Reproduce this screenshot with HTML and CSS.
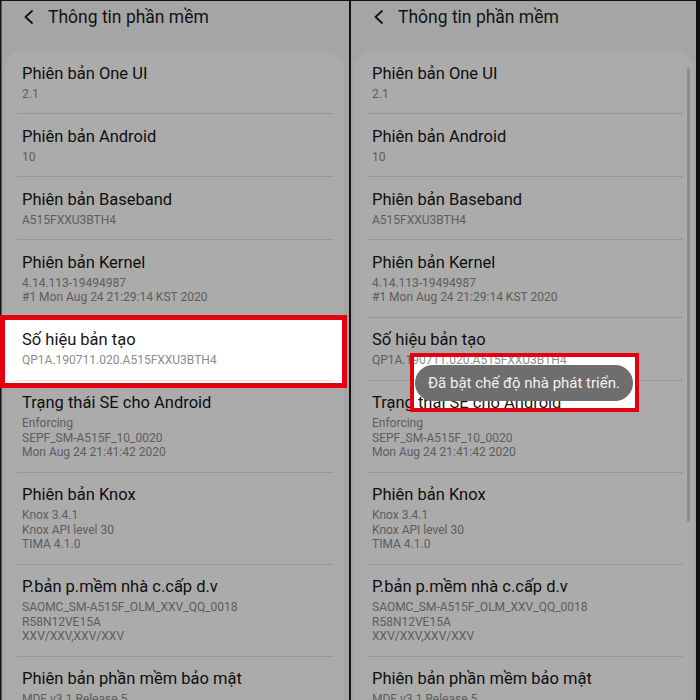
FILE: index.html
```html
<!DOCTYPE html>
<html lang="vi">
<head>
<meta charset="utf-8">
<title>Thông tin phần mềm</title>
<link rel="stylesheet" href="styles.css">
</head>
<body>
<div class="screen">
  <section class="panel panel-left">
    <header class="appbar">
      <svg class="back" viewBox="0 0 9 14" aria-hidden="true"><polyline points="8,1 1.5,7 8,13" fill="none" stroke="#1c1c1c" stroke-width="1.8" stroke-linecap="round" stroke-linejoin="round"/></svg>
      <h1 class="appbar-title">Thông tin phần mềm</h1>
    </header>
    <div class="card">
      <div class="item"><div class="item-title">Phiên bản One UI</div><div class="item-sub">2.1</div></div>
      <div class="divider"></div>
      <div class="item"><div class="item-title">Phiên bản Android</div><div class="item-sub">10</div></div>
      <div class="divider"></div>
      <div class="item"><div class="item-title">Phiên bản Baseband</div><div class="item-sub">A515FXXU3BTH4</div></div>
      <div class="divider"></div>
      <div class="item"><div class="item-title">Phiên bản Kernel</div><div class="item-sub">4.14.113-19494987<br>#1 Mon Aug 24 21:29:14 KST 2020</div></div>
      <div class="divider"></div>
      <div class="item"><div class="item-title">Số hiệu bản tạo</div><div class="item-sub">QP1A.190711.020.A515FXXU3BTH4</div></div>
      <div class="divider"></div>
      <div class="item"><div class="item-title">Trạng thái SE cho Android</div><div class="item-sub">Enforcing<br>SEPF_SM-A515F_10_0020<br>Mon Aug 24 21:41:42 2020</div></div>
      <div class="divider"></div>
      <div class="item"><div class="item-title">Phiên bản Knox</div><div class="item-sub">Knox 3.4.1<br>Knox API level 30<br>TIMA 4.1.0</div></div>
      <div class="divider"></div>
      <div class="item"><div class="item-title">P.bản p.mềm nhà c.cấp d.v</div><div class="item-sub">SAOMC_SM-A515F_OLM_XXV_QQ_0018<br>R58N12VE15A<br>XXV/XXV,XXV/XXV</div></div>
      <div class="divider"></div>
      <div class="item"><div class="item-title">Phiên bản phần mềm bảo mật</div><div class="item-sub">MDF v3.1 Release 5</div></div>
    </div>
    <div class="spot spot-build"></div>
  </section>
  <section class="panel panel-right">
    <header class="appbar">
      <svg class="back" viewBox="0 0 9 14" aria-hidden="true"><polyline points="8,1 1.5,7 8,13" fill="none" stroke="#1c1c1c" stroke-width="1.8" stroke-linecap="round" stroke-linejoin="round"/></svg>
      <h1 class="appbar-title">Thông tin phần mềm</h1>
    </header>
    <div class="card">
      <div class="item"><div class="item-title">Phiên bản One UI</div><div class="item-sub">2.1</div></div>
      <div class="divider"></div>
      <div class="item"><div class="item-title">Phiên bản Android</div><div class="item-sub">10</div></div>
      <div class="divider"></div>
      <div class="item"><div class="item-title">Phiên bản Baseband</div><div class="item-sub">A515FXXU3BTH4</div></div>
      <div class="divider"></div>
      <div class="item"><div class="item-title">Phiên bản Kernel</div><div class="item-sub">4.14.113-19494987<br>#1 Mon Aug 24 21:29:14 KST 2020</div></div>
      <div class="divider"></div>
      <div class="item"><div class="item-title">Số hiệu bản tạo</div><div class="item-sub">QP1A.190711.020.A515FXXU3BTH4</div></div>
      <div class="divider"></div>
      <div class="item"><div class="item-title">Trạng thái SE cho Android</div><div class="item-sub">Enforcing<br>SEPF_SM-A515F_10_0020<br>Mon Aug 24 21:41:42 2020</div></div>
      <div class="divider"></div>
      <div class="item"><div class="item-title">Phiên bản Knox</div><div class="item-sub">Knox 3.4.1<br>Knox API level 30<br>TIMA 4.1.0</div></div>
      <div class="divider"></div>
      <div class="item"><div class="item-title">P.bản p.mềm nhà c.cấp d.v</div><div class="item-sub">SAOMC_SM-A515F_OLM_XXV_QQ_0018<br>R58N12VE15A<br>XXV/XXV,XXV/XXV</div></div>
      <div class="divider"></div>
      <div class="item"><div class="item-title">Phiên bản phần mềm bảo mật</div><div class="item-sub">MDF v3.1 Release 5</div></div>
    </div>
    <div class="scrollbar"></div>
    <div class="spot spot-toast"></div>
    <div class="toast">Đã bật chế độ nhà phát triển.</div>
  </section>
</div>
</body>
</html>
```
FILE: styles.css
```css
html, body {
  margin: 0;
  padding: 0;
}
body {
  width: 700px;
  height: 700px;
  overflow: hidden;
  background: #1a1a1a;
  font-family: Roboto, "Noto Sans", sans-serif;
}
.screen {
  display: flex;
  width: 700px;
  height: 700px;
}
.panel {
  position: relative;
  flex: none;
  width: 350px;
  height: 700px;
  overflow: hidden;
  background: #f7f7f7;
}
.panel-left {
  box-shadow: inset 1.5px 1px 0 #1a1a1a, inset -1px 0 0 #1a1a1a;
}
.panel-right {
  box-shadow: inset 1px 1px 0 #1a1a1a, inset -4px 0 0 #1a1a1a;
}
.appbar {
  display: flex;
  align-items: flex-start;
  gap: 15px;
  height: 51px;
  box-sizing: border-box;
  padding: 6px 0 0 24px;
}
.back {
  flex: none;
  width: 9px;
  height: 14px;
  margin-top: 4px;
}
.appbar-title {
  margin: 0;
  font-size: 17.5px;
  line-height: 22px;
  font-weight: 400;
  color: #1c1c1c;
}
.card {
  margin: 0 6px 0 4px;
  background: #ffffff;
  border-radius: 20px 20px 0 0;
}
.item {
  padding: 12.5px 18px 12px;
}
.item-title {
  margin-bottom: 3px;
  font-size: 16.5px;
  line-height: 20px;
  color: #161616;
  white-space: nowrap;
}
.item-sub {
  font-size: 12px;
  line-height: 14.5px;
  color: #8c8c8c;
  white-space: nowrap;
}
.divider {
  height: 1px;
  margin: 0 11px 0 13px;
  background: #e2e2e2;
}
.scrollbar {
  position: absolute;
  left: 337px;
  top: 68px;
  width: 3px;
  height: 454px;
  border-radius: 2px;
  background: #d2d2d2;
}
.spot {
  position: absolute;
  box-sizing: border-box;
  border: 5px solid #e3000f;
  box-shadow: 0 0 0 1400px rgba(0, 0, 0, 0.33);
}
.spot-build {
  left: 0;
  top: 315px;
  width: 347px;
  height: 73px;
}
.spot-toast {
  left: 60px;
  top: 353px;
  width: 229px;
  height: 59px;
  border-width: 4px;
}
.toast {
  position: absolute;
  left: 65px;
  top: 365px;
  width: 218px;
  height: 36px;
  border-radius: 18px;
  background: #6e6e6e;
  color: #f2f2f2;
  font-size: 15px;
  display: flex;
  align-items: center;
  justify-content: center;
  white-space: nowrap;
}
```
